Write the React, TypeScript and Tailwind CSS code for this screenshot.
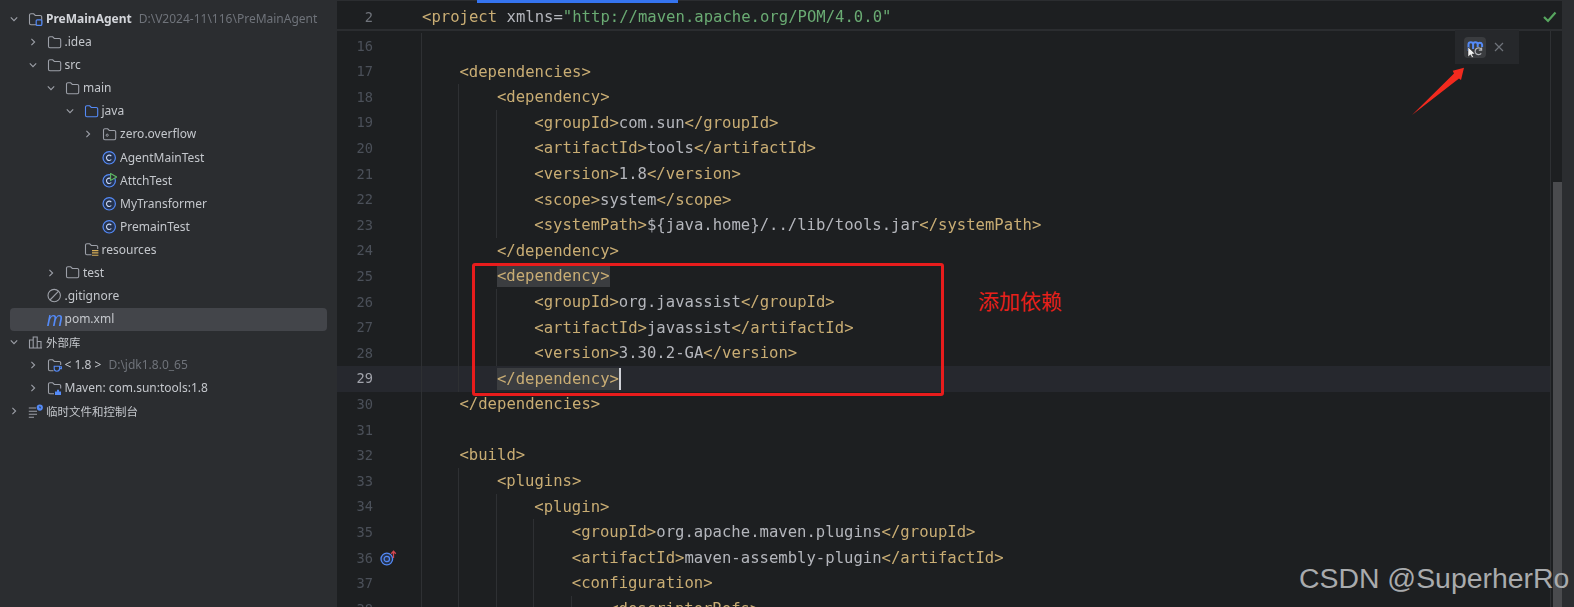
import type { ReactNode } from 'react';

const Chevron = ({ open }: { open: boolean }) => (
  <svg width="8" height="8" viewBox="0 0 8 8" fill="none" stroke="#9da0a8" strokeWidth="1.1">
    <path d={open ? 'M0.8 2.4 L4 5.6 L7.2 2.4' : 'M2.4 0.8 L5.6 4 L2.4 7.2'} />
  </svg>
);

const FOLDER = 'M1.5 3.2 a1.4 1.4 0 0 1 1.4-1.4 h2.8 l1.6 1.7 h5 a1.4 1.4 0 0 1 1.4 1.4 v6.4 a1.4 1.4 0 0 1-1.4 1.4 h-9.4 a1.4 1.4 0 0 1-1.4-1.4 z';

const Folder = ({ color = '#9da0a8', children }: { color?: string; children?: ReactNode }) => (
  <svg width="15" height="15" viewBox="0 0 15 15" fill="none">
    <path d={FOLDER} stroke={color} strokeWidth="1.1" />
    {children}
  </svg>
);

const ClassIcon = ({ run }: { run?: boolean }) => (
  <svg width="15" height="15" viewBox="0 0 15 15" fill="none">
    <circle cx="7.2" cy="7.8" r="6.2" stroke="#548af7" strokeWidth="1.2" fill="#25324d" />
    <path d="M9.3 6.1 a2.7 2.7 0 1 0 0 3.4" stroke="#c9d6f2" strokeWidth="1.1" />
    {run && <path d="M8.6 0.6 L14.6 4 L8.6 7.4 z" fill="#2b2d30" stroke="#5fb865" strokeWidth="1.1" />}
  </svg>
);

const ModuleIcon = () => (
  <Folder>
    <rect x="8.2" y="7.8" width="5.6" height="5.6" rx="1" fill="#2b2d30" stroke="#548af7" strokeWidth="1.2" />
  </Folder>
);

const PackageIcon = () => (
  <Folder>
    <circle cx="5.2" cy="8.2" r="1.1" stroke="#9da0a8" strokeWidth="0.9" />
  </Folder>
);

const ResourceIcon = () => (
  <Folder>
    <rect x="7.5" y="7" width="7.5" height="7.5" fill="#2b2d30" />
    <path d="M8 8.6 H14.4 M8 10.9 H14.4 M8 13.2 H14.4" stroke="#d6ae58" strokeWidth="1.1" />
  </Folder>
);

const JdkIcon = () => (
  <Folder>
    <rect x="6.5" y="7" width="8.5" height="8" fill="#2b2d30" />
    <path d="M7.2 8.2 H12.6 V10.6 a2.7 2.7 0 0 1-5.4 0 z M12.6 8.8 H14.4 V10.6 H12.4" stroke="#548af7" strokeWidth="1.1" />
  </Folder>
);

const MavenLibIcon = () => (
  <Folder>
    <rect x="7" y="7.5" width="8" height="7.5" fill="#2b2d30" />
    <path d="M8 14 V10.6 H10 V8.8 H12 V10.6 H14 V14 z" fill="#548af7" />
  </Folder>
);

const IgnoreIcon = () => (
  <svg width="15" height="15" viewBox="0 0 15 15" fill="none" stroke="#9da0a8" strokeWidth="1.1">
    <circle cx="7.2" cy="7.6" r="6.2" />
    <path d="M3 12 L11.6 3.2" />
  </svg>
);

const LibraryIcon = () => (
  <svg width="15" height="15" viewBox="0 0 15 15" fill="none" stroke="#9da0a8" strokeWidth="1.1">
    <path d="M1 13 H14 M1.5 13 V5 H5.2 V13 M5.2 13 V2 H9.2 V13 M9.2 13 V6.5 H13 V13" />
  </svg>
);

const ScratchIcon = () => (
  <svg width="15" height="15" viewBox="0 0 15 15" fill="none">
    <path d="M0.8 4 H8 M0.8 7.2 H9 M0.8 10.2 H9 M0.8 13.2 H6" stroke="#9da0a8" strokeWidth="1.1" />
    <circle cx="11.8" cy="3.6" r="3.1" fill="#548af7" />
    <path d="M11.8 2.2 V3.8 H13" stroke="#2b2d30" strokeWidth="0.8" />
  </svg>
);

type TreeRow = {
  depth: number;
  open?: boolean;
  icon: ReactNode;
  label: string;
  hint?: string;
  bold?: boolean;
  selected?: boolean;
  cjk?: boolean;
};

const tree: TreeRow[] = [
  { depth: 0, open: true, icon: <ModuleIcon />, label: 'PreMainAgent', hint: 'D:\\V2024-11\\116\\PreMainAgent', bold: true },
  { depth: 1, open: false, icon: <Folder />, label: '.idea' },
  { depth: 1, open: true, icon: <Folder />, label: 'src' },
  { depth: 2, open: true, icon: <Folder />, label: 'main' },
  { depth: 3, open: true, icon: <Folder color="#548af7" />, label: 'java' },
  { depth: 4, open: false, icon: <PackageIcon />, label: 'zero.overflow' },
  { depth: 4, icon: <ClassIcon />, label: 'AgentMainTest' },
  { depth: 4, icon: <ClassIcon run />, label: 'AttchTest' },
  { depth: 4, icon: <ClassIcon />, label: 'MyTransformer' },
  { depth: 4, icon: <ClassIcon />, label: 'PremainTest' },
  { depth: 3, icon: <ResourceIcon />, label: 'resources' },
  { depth: 2, open: false, icon: <Folder />, label: 'test' },
  { depth: 1, icon: <IgnoreIcon />, label: '.gitignore' },
  {
    depth: 1,
    icon: <span className="block w-[15px] text-[19px] leading-[15px] italic text-[#548af7]">m</span>,
    label: 'pom.xml',
    selected: true,
  },
  { depth: 0, open: true, icon: <LibraryIcon />, label: '外部库', cjk: true },
  { depth: 1, open: false, icon: <JdkIcon />, label: '< 1.8 >', hint: 'D:\\jdk1.8.0_65' },
  { depth: 1, open: false, icon: <MavenLibIcon />, label: 'Maven: com.sun:tools:1.8' },
  { depth: 0, open: false, icon: <ScratchIcon />, label: '临时文件和控制台', cjk: true },
];

const Row = ({ row }: { row: TreeRow }) => (
  <div
    className={`mx-[10px] flex h-[23.08px] items-center rounded-[4px] ${row.selected ? 'bg-[#43454a]' : ''}`}
    style={{ paddingLeft: row.depth * 18.5 }}
  >
    <span className="flex w-2 shrink-0 justify-center">{row.open !== undefined && <Chevron open={row.open} />}</span>
    <span className="ml-[10px] w-[14px] shrink-0">{row.icon}</span>
    <span className={`ml-1 whitespace-pre ${row.bold ? 'font-bold text-[#d3d5da]' : ''} ${row.cjk ? 'text-[11.5px]' : ''}`}>
      {row.label}
    </span>
    {row.hint && <span className="ml-[7px] whitespace-pre text-[#6f737a]">{row.hint}</span>}
  </div>
);

type CodeLine = { n: number; indent: number; text?: string };

const lines: CodeLine[] = [
  { n: 16, indent: 4 },
  { n: 17, indent: 4, text: '<dependencies>' },
  { n: 18, indent: 8, text: '<dependency>' },
  { n: 19, indent: 12, text: '<groupId>com.sun</groupId>' },
  { n: 20, indent: 12, text: '<artifactId>tools</artifactId>' },
  { n: 21, indent: 12, text: '<version>1.8</version>' },
  { n: 22, indent: 12, text: '<scope>system</scope>' },
  { n: 23, indent: 12, text: '<systemPath>${java.home}/../lib/tools.jar</systemPath>' },
  { n: 24, indent: 8, text: '</dependency>' },
  { n: 25, indent: 8, text: '<dependency>' },
  { n: 26, indent: 12, text: '<groupId>org.javassist</groupId>' },
  { n: 27, indent: 12, text: '<artifactId>javassist</artifactId>' },
  { n: 28, indent: 12, text: '<version>3.30.2-GA</version>' },
  { n: 29, indent: 8, text: '</dependency>' },
  { n: 30, indent: 4, text: '</dependencies>' },
  { n: 31, indent: 4 },
  { n: 32, indent: 4, text: '<build>' },
  { n: 33, indent: 8, text: '<plugins>' },
  { n: 34, indent: 12, text: '<plugin>' },
  { n: 35, indent: 16, text: '<groupId>org.apache.maven.plugins</groupId>' },
  { n: 36, indent: 16, text: '<artifactId>maven-assembly-plugin</artifactId>' },
  { n: 37, indent: 16, text: '<configuration>' },
  { n: 38, indent: 20, text: '<descriptorRefs>' },
];

const XmlText = ({ text }: { text: string }) => (
  <>
    {text.split(/(<[^>]+>)/).map((part, i) =>
      part.startsWith('<') ? (
        <span key={i} className="text-[#c9ad74]">
          {part}
        </span>
      ) : (
        <span key={i}>{part}</span>
      ),
    )}
  </>
);

const TargetIcon = () => (
  <svg width="17" height="16" viewBox="0 0 17 16" fill="none">
    <circle cx="6.8" cy="9" r="5.8" stroke="#548af7" strokeWidth="1.3" fill="#25324d" />
    <circle cx="6.8" cy="9" r="2.7" stroke="#548af7" strokeWidth="1.2" />
    <path d="M13.5 8 V1.5 M11.2 3.8 L13.5 1.2 L15.8 3.8" stroke="#d2454f" strokeWidth="1.3" />
  </svg>
);

const Code = ({ line }: { line: CodeLine }) => {
  const current = line.n === 29;
  const matched = line.n === 25 || line.n === 29;
  return (
    <div className={`flex h-[25.6px] items-center ${current ? 'bg-[#26282e]' : ''}`}>
      <span className={`w-9 shrink-0 text-right text-[13.7px] ${current ? 'text-[#a1a3ab]' : 'text-[#4b5059]'}`}>{line.n}</span>
      <span className="ml-[7px] w-[41px] shrink-0">{line.n === 36 && <TargetIcon />}</span>
      {Array.from({ length: line.indent / 4 }, (_, i) => (
        <span key={i} className="h-full w-[37.44px] shrink-0 border-l border-[#2e3033]" />
      ))}
      {line.text && (
        <span className={`ml-px inline-block h-[22px] whitespace-pre leading-[22px] ${matched ? 'bg-[#3b3d40]' : ''}`}>
          <XmlText text={line.text} />
        </span>
      )}
      {current && <span className="h-[22px] w-[2px] shrink-0 bg-[#ced0d6]" />}
    </div>
  );
};

const App = () => (
  <div className="relative flex h-[607px] w-[1574px] overflow-hidden bg-[#1d1f21]">
    {/* Project tree */}
    <aside className="w-[337px] shrink-0 bg-[#2b2d30] pt-[7.5px] font-['Noto_Sans','Noto_Sans_CJK_SC',sans-serif] text-[12px] text-[#c4c7cc] blur-[0.3px]">
      {tree.map((row) => (
        <Row key={row.label} row={row} />
      ))}
    </aside>

    {/* Editor */}
    <main className="flex min-w-0 flex-1 flex-col font-['DejaVu_Sans_Mono',monospace] text-[15.6px] text-[#b4b6bc] blur-[0.3px]">
      <div className="relative flex h-[31px] shrink-0 items-center border-t border-b-2 border-[#2b2d30] pt-[5px]">
        <div className="absolute -top-px left-[140px] h-[3px] w-[201px] bg-[#3574f0]" />
        <span className="w-9 shrink-0 text-right text-[13.7px] text-[#6f737a]">2</span>
        <span className="ml-[48px] whitespace-pre pl-px">
          <span className="text-[#c9ad74]">{'<project'}</span> xmlns=
          <span className="text-[#6aab73]">"http://maven.apache.org/POM/4.0.0"</span>
        </span>
        <svg className="absolute left-[1205px] top-[9px]" width="16" height="14" viewBox="0 0 16 14" fill="none" stroke="#57a65f" strokeWidth="2.2">
          <path d="M2 7 L6 11 L13.5 2.5" />
        </svg>
      </div>
      <div className="flex min-h-0 flex-1">
        <div className="min-w-0 flex-1 overflow-hidden pt-[2.2px]">
          {lines.map((line) => (
            <Code key={line.n} line={line} />
          ))}
        </div>
        <div className="w-[12px] shrink-0 border-l border-[#2e3033] pl-[2px] pt-[151px]">
          <div className="h-full w-[9px] bg-[#4a4b4e]" />
        </div>
      </div>
    </main>
    <div className="w-[12px] shrink-0 bg-[#2b2d30]" />

    {/* Maven load popup */}
    <div className="absolute left-[1455px] top-[30px] flex h-[34px] w-[64px] items-center bg-[#26282b] pl-[9px]">
      <span className="flex h-[21px] w-[22px] items-center justify-center rounded-[4px] bg-[#3a3c3f]">
        <svg width="22" height="21" viewBox="0 0 22 21" fill="none">
          <path d="M4.5 14 V7.5 a2.3 2.3 0 0 1 4.6 0 V12 M9.1 7.5 a2.3 2.3 0 0 1 4.6 0 V10 M13.7 7.5 a2.3 2.3 0 0 1 4.4 0 V10" stroke="#548af7" strokeWidth="2" />
          <path d="M17.2 12.2 a3.4 3.4 0 1 0 0 4.2 M17.6 10.4 V13.2 H14.8" stroke="#b4b6bc" strokeWidth="1.2" />
          <path d="M4 10 V20 L6.4 17.8 L8 20.8 L9.5 20 L8 17.2 L11 16.8 z" fill="#f2f2f2" stroke="#1d1f21" strokeWidth="0.5" />
        </svg>
      </span>
      <svg className="ml-[8px]" width="10" height="10" viewBox="0 0 10 10" fill="none" stroke="#6f737a" strokeWidth="1.2">
        <path d="M1 1 L9 9 M9 1 L1 9" />
      </svg>
    </div>

    {/* Annotations drawn over the screenshot */}
    <svg className="absolute left-[1405px] top-[60px]" width="70" height="60" viewBox="0 0 70 60">
      <path d="M7 55 L49 13.5 L47.7 10.7 L59 7.7 L56 20 L54 18.5 z" fill="#f22a1e" />
    </svg>
    <div className="absolute left-[472px] top-[263px] h-[133px] w-[472px] rounded-[3px] border-[3px] border-[#e81c1c]" />
    <span className="absolute left-[978px] top-[285px] font-['Noto_Sans_CJK_SC',sans-serif] text-[21px] leading-[31px] text-[#e8201a]">添加依赖</span>
    <span className="absolute left-[1299px] top-[561px] font-['Liberation_Sans',sans-serif] text-[28.4px] leading-[34px] whitespace-pre text-[#a9abad]">CSDN @SuperherRo</span>
  </div>
);

export default App;
